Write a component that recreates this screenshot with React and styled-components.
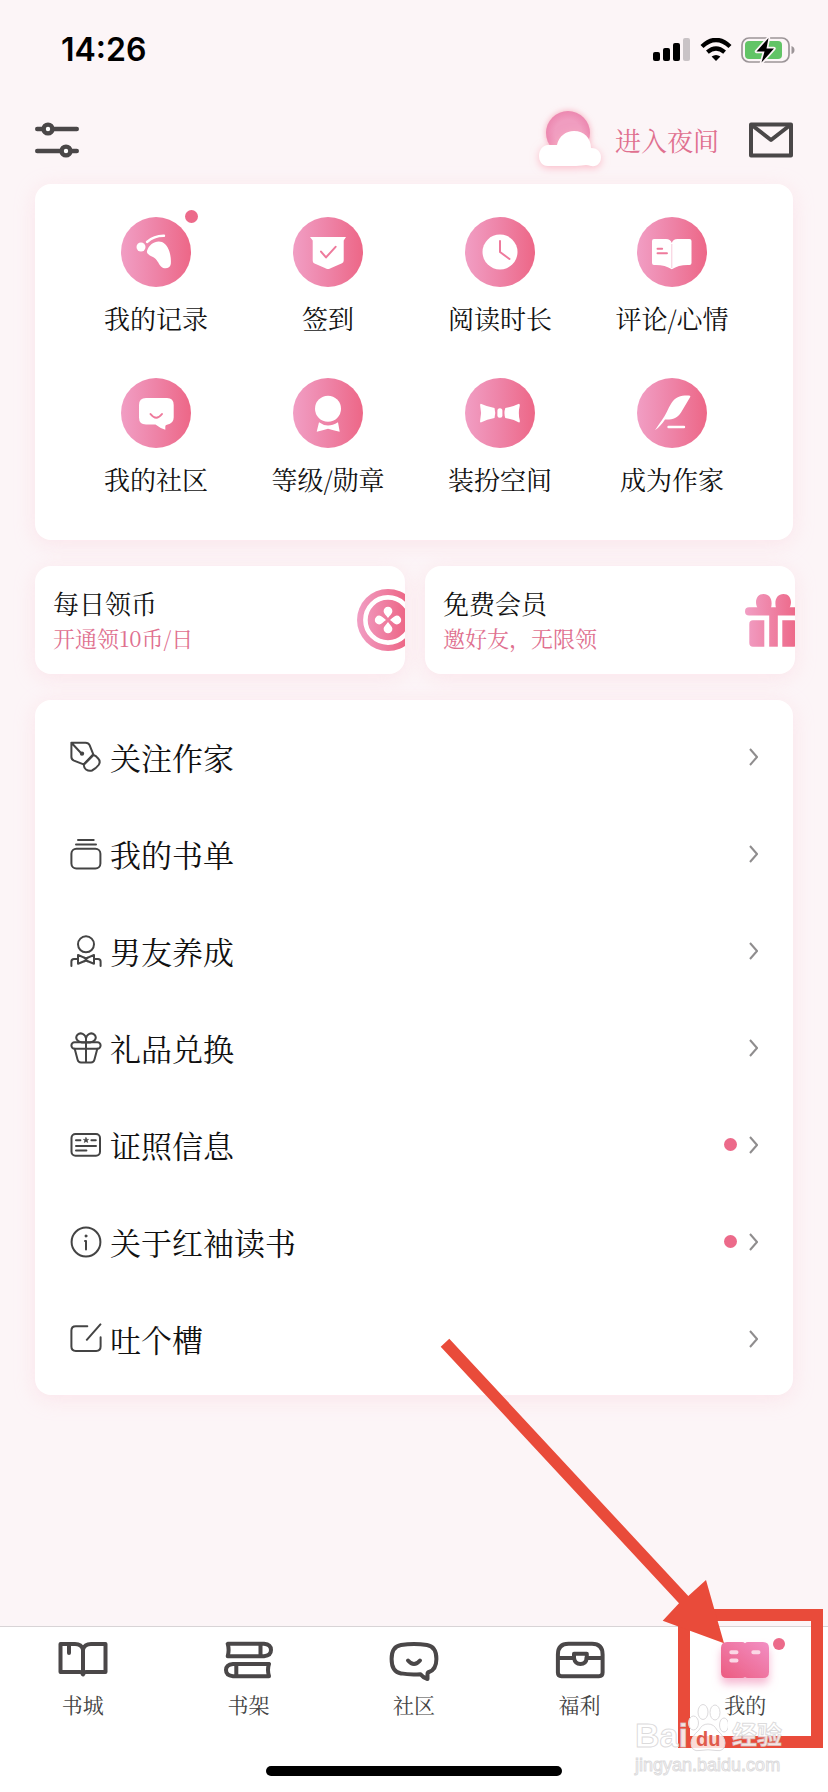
import React from "react";
import styled, { createGlobalStyle, css } from "styled-components";

const GlobalStyle = createGlobalStyle`
  *, *::before, *::after {
    box-sizing: border-box;
  }
  body {
    margin: 0;
    background: #fcf5f7;
    color: #111;
    font-family: "Noto Serif CJK SC", "Source Han Serif SC", "Noto Sans CJK SC", serif;
  }
  button {
    margin: 0;
    padding: 0;
    border: 0;
    background: none;
    color: inherit;
    font: inherit;
    cursor: pointer;
  }
  svg {
    display: block;
    flex: none;
  }
`;

const Page = styled.div`
  display: flex;
  flex-direction: column;
  min-height: 100vh;
  overflow: hidden;
`;

const StatusBar = styled.div`
  display: flex;
  align-items: center;
  justify-content: space-between;
  height: 100px;
  padding: 0 33px 0 61px;
`;

const Clock = styled.time`
  color: #000;
  font-family: Inter, "Liberation Sans", sans-serif;
  font-size: 32px;
  font-weight: 600;
  line-height: 40px;
`;

const StatusIcons = styled.div`
  display: flex;
  align-items: center;
  gap: 9px;
`;

const Header = styled.header`
  display: flex;
  align-items: center;
  justify-content: space-between;
  height: 80px;
  padding: 0 35px;
`;

const HeaderRight = styled.div`
  display: flex;
  align-items: center;
  gap: 30px;
`;

const NightButton = styled.button`
  display: flex;
  align-items: center;
  gap: 8px;
  color: #e0708f;
  font-size: 26px;
  line-height: 36px;
`;

const Main = styled.main`
  display: flex;
  flex-direction: column;
  gap: 26px;
  padding: 4px 35px 40px;
`;

const Card = styled.section`
  border-radius: 16px;
  background: #fff;
  box-shadow: 0 4px 20px rgba(252, 204, 218, 0.4);
`;

const FeatureGrid = styled(Card)`
  display: grid;
  grid-template-columns: repeat(4, 1fr);
  row-gap: 37px;
  padding: 33px 35px 38px;
`;

const Feature = styled.button`
  display: flex;
  flex-direction: column;
  align-items: center;
  gap: 13px;
  height: 124px;
`;

const FeatureIcon = styled.span`
  position: relative;
`;

const FeatureLabel = styled.span`
  font-size: 26px;
  line-height: 36px;
  white-space: nowrap;
`;

const Dot = styled.i`
  flex: none;
  width: 13px;
  height: 13px;
  border-radius: 50%;
  background: #ec6a8a;
  ${(props) =>
    props.$corner &&
    css`
      position: absolute;
      top: -7px;
      right: -7px;
    `}
`;

const Promos = styled.div`
  display: grid;
  grid-template-columns: 1fr 1fr;
  gap: 20px;
  margin-right: -2px;
`;

const Promo = styled.button`
  position: relative;
  display: flex;
  flex-direction: column;
  justify-content: center;
  height: 108px;
  padding: 0 18px;
  border-radius: 16px;
  background: #fff;
  box-shadow: 0 4px 20px rgba(252, 204, 218, 0.4);
  text-align: left;
`;

const PromoTitle = styled.span`
  font-size: 26px;
  line-height: 36px;
`;

const PromoText = styled.span`
  color: #e0708f;
  font-size: 22px;
  line-height: 34px;
`;

const PromoArt = styled.span`
  position: absolute;
  top: 0;
  right: 0;
  display: flex;
  align-items: center;
  width: ${(props) => props.$visible}px;
  height: 100%;
  overflow: hidden;
  border-radius: 0 16px 16px 0;
`;

const Menu = styled(Card)`
  display: flex;
  flex-direction: column;
  padding: 8px 35px;
`;

const MenuRow = styled.button`
  display: flex;
  align-items: center;
  height: 97px;
`;

const MenuLabel = styled.span`
  flex: 1;
  padding-left: 8px;
  font-size: 31px;
  line-height: 44px;
  text-align: left;
`;

const MenuEnd = styled.span`
  display: flex;
  align-items: center;
  gap: 12px;
`;

const Footer = styled.footer`
  position: relative;
  margin-top: auto;
`;

const TabBar = styled.nav`
  display: flex;
  height: 166px;
  border-top: 1px solid #d8d4d6;
  background: #fff;
`;

const TabCell = styled.div`
  position: relative;
  flex: 1;
`;

const Tab = styled.button`
  display: flex;
  flex-direction: column;
  align-items: center;
  gap: 6px;
  width: 100%;
  padding-top: 13px;
`;

const TabLabel = styled.span`
  color: #444;
  font-size: 21px;
  line-height: 32px;
`;

const Highlight = styled.div`
  position: absolute;
  top: -18px;
  right: 5px;
  width: 145px;
  height: 139px;
  border: 12px solid #e94b3a;
  pointer-events: none;
`;

const Arrow = styled.svg`
  position: absolute;
  right: 104px;
  bottom: 148px;
  pointer-events: none;
`;

const Watermark = styled.div`
  position: absolute;
  right: 46px;
  top: 76px;
  display: flex;
  flex-direction: column;
  color: rgba(255, 255, 255, 0.85);
  font-family: "Liberation Sans", "Noto Sans CJK SC", sans-serif;
  white-space: nowrap;
  -webkit-text-stroke: 1px rgba(205, 203, 205, 0.7);
  pointer-events: none;
`;

const WatermarkBrand = styled.div`
  display: flex;
  align-items: flex-end;
  height: 50px;
  font-size: 34px;
  font-weight: 700;
  line-height: 36px;
`;

const WatermarkName = styled.span`
  margin-left: 4px;
  font-size: 25px;
`;

const WatermarkUrl = styled.span`
  font-size: 18px;
  line-height: 24px;
`;

const HomeIndicator = styled.div`
  position: absolute;
  right: 0;
  bottom: 16px;
  left: 0;
  width: 296px;
  height: 10px;
  margin: 0 auto;
  border-radius: 5px;
  background: #000;
`;

const features = [
  {
    label: "我的记录",
    dot: true,
    art: (
      <>
        <circle cx="20" cy="30" r="4.5" />
        <path d="M26 25C31 20.5 37 18.7 43 18.8" fill="none" stroke="#fff" strokeWidth="2.4" strokeLinecap="round" />
        <path d="M26 34C28 27 35 23 41 25C48 28 50.5 39 49.8 47C49 52 43 52.5 40 49.5C37 46 36.5 42.5 32 40C28 38 25.4 37 26 34Z" />
      </>
    ),
  },
  {
    label: "签到",
    art: (
      <>
        <path d="M17 20H53L50.7 23.5V43.5Q50.7 45.5 49 46.3L37 51.5Q35 52.5 33 51.5L21 46.3Q19.7 45.5 19.7 43.5V23.5Z" />
        <path d="M28 34.6L33 40.4L42.6 29.8" fill="none" stroke="#ee7a9c" strokeWidth="2" strokeLinecap="round" strokeLinejoin="round" />
      </>
    ),
  },
  {
    label: "阅读时长",
    art: (
      <>
        <circle cx="35" cy="35" r="17.5" />
        <path d="M35 24V35L44.5 42" fill="none" stroke="#ee7a9c" strokeWidth="2" strokeLinecap="round" strokeLinejoin="round" />
      </>
    ),
  },
  {
    label: "评论/心情",
    art: (
      <>
        <path d="M17 22H29Q33.5 22 34.8 26Q36 22 40.5 22H52.5Q54.5 22 54.5 24V46Q54.5 48 52.5 48Q42 47.5 34.8 52.3Q27.5 47.5 17 48Q15 48 15 46V24Q15 22 17 22Z" />
        <path d="M34.8 27V51" stroke="#f4b3c8" strokeWidth="0.7" />
        <path d="M20.5 31.7H25.2M20.5 36.2H30" stroke="#ee7a9c" strokeWidth="1.9" strokeLinecap="round" />
      </>
    ),
  },
  {
    label: "我的社区",
    art: (
      <>
        <path d="M25 20H46Q52.7 20 52.7 27V39.5Q52.7 45.5 46 46.7Q44.3 47 44.3 48.5V51.7Q39.5 50.5 34.5 46.5H25Q18 46.5 18 39.5V27Q18 20 25 20Z" />
        <path d="M29.5 36Q35.2 43.5 41 36" fill="none" stroke="#ee7a9c" strokeWidth="2" strokeLinecap="round" />
      </>
    ),
  },
  {
    label: "等级/勋章",
    art: (
      <>
        <circle cx="35" cy="30.7" r="13" />
        <path d="M26 44.3Q30.5 47.6 35 47.6Q39.5 47.6 45 44.3L46.7 53.7Q40 52.4 35 50.8Q30 52.4 23.7 53.7Z" />
      </>
    ),
  },
  {
    label: "装扮空间",
    art: (
      <>
        <path d="M15.8 25.7Q23 29 29.5 30Q31 35 29.5 40Q22 41 15.8 44.5Q14.6 44.5 15.2 42Q17 35 15.2 28Q14.8 26 15.8 25.7Z" />
        <path d="M54 25.7Q47 29 40.3 30Q38.6 35 40.3 40Q48 41 54 44.5Q55.2 44.5 54.7 42Q53 35 54.7 28Q55 26 54 25.7Z" />
        <rect x="32.4" y="30.3" width="5" height="9.4" rx="2.5" />
      </>
    ),
  },
  {
    label: "成为作家",
    art: (
      <>
        <path d="M53 17.7C45 17.2 39 18.5 34.5 25C31 30.5 28.5 37.5 25 42Q21 47.5 18 52.3C22 49.5 25.5 45.5 28 41.5C35 42 40.5 40 44 34.5L53.2 19Q53.6 18 53 17.7Z" />
        <path d="M31.5 49H47" stroke="#fff" strokeWidth="2.4" strokeLinecap="round" />
      </>
    ),
  },
];

const menu = [
  {
    label: "关注作家",
    art: (
      <>
        <path d="M1.4 1.7H15.5Q18.5 1.7 19.6 4.2L23.3 13.3L13.6 23.4L4 19.6Q1.4 18.4 1.4 16ZM1.4 1.7L11 12" />
        <circle cx="12" cy="12.6" r="1.2" fill="#444" />
        <path d="M14 23.6L23.5 14Q26 14.6 28 17.3Q31 20.5 28.6 24Q26 27.5 22 29.5Q19 30.5 16 28.5Q13.5 26.5 14 23.6Z" />
      </>
    ),
  },
  {
    label: "我的书单",
    art: (
      <>
        <path d="M8 2H23.7M6 6.4H26" />
        <rect x="1.4" y="10.8" width="29" height="19.8" rx="5" />
      </>
    ),
  },
  {
    label: "男友养成",
    art: (
      <>
        <circle cx="16" cy="9.3" r="8" />
        <path d="M1.4 31V26.5Q1.4 24 4 24H8M30.6 31V26.5Q30.6 24 28 24H24" />
        <path d="M8 20V28.7L16 25.5L24 28.7V20L16 23.4Z" />
        <path d="M14.5 22.8L17.5 26.2M17.5 22.8L14.5 26.2" />
      </>
    ),
  },
  {
    label: "礼品兑换",
    art: (
      <>
        <path d="M16 10.5C6 11 5 5.5 7.5 2.8C10.5 -.2 15.5 2 16 6.5C16.5 2 21.5 -.2 24.5 2.8C27 5.5 26 11 16 10.5Z" />
        <rect x="1.4" y="10.3" width="29.2" height="6.4" rx="3.2" />
        <path d="M4.7 16.7L7.6 27.8Q8.3 30.4 11 30.4H21Q23.7 30.4 24.4 27.8L27.3 16.7M16 6V30.4" />
      </>
    ),
  },
  {
    label: "证照信息",
    dot: true,
    art: (
      <>
        <rect x="1.5" y="5" width="28.5" height="21.8" rx="4" />
        <path d="M6 11.2H10.4M21.4 11.2H25.8M6 17H26M6 21.6H16.4" />
        <path d="M16 8.6L16.8 10.4H18.6L17.2 11.6L17.7 13.5L16 12.4L14.3 13.5L14.8 11.6L13.4 10.4H15.2Z" fill="#444" strokeWidth="0.6" />
      </>
    ),
  },
  {
    label: "关于红袖读书",
    dot: true,
    art: (
      <>
        <circle cx="16" cy="16" r="14.4" />
        <path d="M16 15V23.6M15 15H16" />
        <circle cx="16" cy="10" r="1.2" fill="#444" strokeWidth="0.5" />
      </>
    ),
  },
  {
    label: "吐个槽",
    art: <path d="M17.3 3.2H5.8Q1.4 3.2 1.4 7.6V23.6Q1.4 28 5.8 28H26.2Q30.6 28 30.6 23.6V14.2M16.8 16.8L30.4 1.4" />,
  },
];

const tabs = [
  {
    label: "书城",
    art: (
      <>
        <path d="M2.5 4H17Q23.5 4 25 9.5Q26.5 4 33 4H47.5V32H28Q26 32 25 34.5Q24 32 22 32H2.5ZM25 9.5V34" />
        <path d="M11 5V13" />
      </>
    ),
  },
  {
    label: "书架",
    art: (
      <>
        <path d="M4.7 3.8H41Q48 4.5 48 10Q48 15.5 41 16.2H4.7Q6.5 10 4.7 3.8ZM37.5 4V16" />
        <path d="M46 23.9H10Q3 24.5 3 30Q3 35.5 10 36.2H46Q44 30 46 23.9ZM13.3 24V36" />
      </>
    ),
  },
  {
    label: "社区",
    art: (
      <>
        <path d="M12 5Q25 2.8 38 5Q47.4 6.5 47.4 19Q47.4 29.5 40 32Q38.5 32.5 38.5 34V39Q34 37.5 31.5 34.2Q21 35 12 33.4Q2.6 32 2.6 19Q2.6 6.5 12 5Z" />
        <path d="M19 20.5Q25 27.5 31 20.5" />
      </>
    ),
  },
  {
    label: "福利",
    art: (
      <>
        <path d="M13.5 3.8H37Q47.6 3.8 47.6 14.5V32.5Q47.6 36.2 44 36.2H6.5Q2.9 36.2 2.9 32.5V14.5Q2.9 3.8 13.5 3.8ZM2.9 18H19M31.5 18H47.6" />
        <path d="M19 13.7H31.8V18Q31 24 25.4 24Q20 24 19 18Z" />
      </>
    ),
  },
];

function PinkGradient({ id }) {
  return (
    <linearGradient id={id} x1="0" x2="1" y1="0" y2="0">
      <stop offset="0" stopColor="#f19ec4" />
      <stop offset="0.5" stopColor="#ee83a7" />
      <stop offset="1" stopColor="#ed6787" />
    </linearGradient>
  );
}

function SignalIcon() {
  return (
    <svg width="38" height="24" viewBox="0 0 38 24">
      <rect x="0" y="14" width="7" height="9" rx="2" />
      <rect x="10" y="10" width="7" height="13" rx="2" />
      <rect x="20" y="5" width="7" height="18" rx="2" />
      <rect x="30" y="0" width="7" height="23" rx="2" fill="#c9c3c6" />
    </svg>
  );
}

function WifiIcon() {
  return (
    <svg width="32" height="24" viewBox="0 0 32 24">
      <path d="M2 8.5Q16 -4.5 30 8.5" fill="none" stroke="#000" strokeWidth="4.4" />
      <path d="M7.4 14.2Q16 6.8 24.6 14.2" fill="none" stroke="#000" strokeWidth="4.2" />
      <path d="M11.6 18.6Q16 15.2 20.4 18.6L16 23Z" />
    </svg>
  );
}

function BatteryIcon() {
  return (
    <svg width="54" height="28" viewBox="0 0 54 28">
      <rect x="1" y="2" width="47" height="24" rx="7" fill="none" stroke="#9c9598" strokeWidth="1.7" />
      <rect x="4" y="5" width="37" height="18" rx="4" fill="#62c466" />
      <path d="M50.5 10Q53.5 11 53.5 14Q53.5 17 50.5 18Z" fill="#9c9598" />
      <path d="M27.5 2L15.5 15.5H23.5L20.5 26.5L33 12.5H25.5Z" stroke="#fcf5f7" strokeWidth="3.4" strokeLinejoin="round" />
      <path d="M27.5 2L15.5 15.5H23.5L20.5 26.5L33 12.5H25.5Z" />
    </svg>
  );
}

function SlidersIcon() {
  return (
    <svg width="44" height="36" viewBox="0 0 44 36" fill="none" stroke="#4a4748" strokeWidth="4.4" strokeLinecap="round">
      <path d="M2.2 7H41.8M2.2 29H41.8" />
      <circle cx="13" cy="7" r="4.4" fill="#fff" />
      <circle cx="31" cy="29" r="4.4" fill="#fff" />
    </svg>
  );
}

function MailIcon() {
  return (
    <svg width="44" height="36" viewBox="0 0 44 36" fill="none" stroke="#4a4748" strokeWidth="4" strokeLinejoin="round">
      <rect x="2" y="2.5" width="40" height="31" />
      <path d="M4 4L22 18L40 4" />
    </svg>
  );
}

function SunCloudIcon() {
  return (
    <svg width="72" height="76" viewBox="0 0 72 76" overflow="visible">
      <defs>
        <filter id="sunGlow" x="-30%" y="-30%" width="160%" height="160%">
          <feDropShadow dx="0" dy="0" stdDeviation="3.4" floodColor="#f6a3b6" floodOpacity="0.9" />
        </filter>
        <filter id="cloudGlow" x="-30%" y="-30%" width="160%" height="170%">
          <feDropShadow dx="0" dy="2" stdDeviation="4" floodColor="#fbb4c2" floodOpacity="0.9" />
        </filter>
        <radialGradient id="sunFill">
          <stop offset="0.6" stopColor="#f09dc0" />
          <stop offset="1" stopColor="#ec88b0" />
        </radialGradient>
      </defs>
      <circle cx="33" cy="31" r="22" fill="url(#sunFill)" filter="url(#sunGlow)" />
      <path
        d="M13 43H22C24 34 31 29 39 29C49 29 56 36 56 46C63 46 66 51 66 55C66 61 62 65 56 64C51 62 46 64 41 64H13C7 64 4 59 4 54C4 48 8 43 13 43Z"
        fill="#fff"
        filter="url(#cloudGlow)"
      />
    </svg>
  );
}

function CoinArt() {
  const petal = "M31 29C29 26 26.6 24.5 26.6 22.2A4.4 4.4 0 0 1 35.4 22.2C35.4 24.5 33 26 31 29Z";
  return (
    <svg width="62" height="62" viewBox="0 0 62 62">
      <defs>
        <linearGradient id="coinFill" gradientUnits="userSpaceOnUse" x1="0" x2="48" y1="0" y2="0">
          <stop offset="0" stopColor="#f19ec4" />
          <stop offset="1" stopColor="#ed6787" />
        </linearGradient>
      </defs>
      <circle cx="31" cy="31" r="31" fill="url(#coinFill)" />
      <circle cx="31" cy="31" r="22.6" fill="none" stroke="#fff" strokeWidth="4.6" />
      {[0, 90, 180, 270].map((angle) => (
        <path key={angle} d={petal} fill="#fff" transform={`rotate(${angle} 31 31)`} />
      ))}
    </svg>
  );
}

function GiftArt() {
  return (
    <svg width="58" height="56" viewBox="0 -2 58 56">
      <defs>
        <linearGradient id="giftFill" gradientUnits="userSpaceOnUse" x1="0" x2="52" y1="0" y2="0">
          <stop offset="0" stopColor="#f19ec4" />
          <stop offset="1" stopColor="#ed6787" />
        </linearGradient>
      </defs>
      <g fill="url(#giftFill)">
        <path d="M12.5 14C9 7 12 0 18.5 0C25 0 28 6 26 14ZM31 14C29 6 32 0 38.5 0C45 0 48 7 44.5 14Z" />
        <rect x="0" y="13.3" width="57" height="8.2" rx="4.1" />
        <rect x="24.2" y="20" width="8.6" height="32.7" />
        <path d="M8 26.3H19.3V52.7H8Q4.3 52.7 4.3 49V30Q4.3 26.3 8 26.3Z" />
        <path d="M37.3 26.3H49Q52.7 26.3 52.7 30V49Q52.7 52.7 49 52.7H37.3Z" />
      </g>
    </svg>
  );
}

function MineIcon() {
  return (
    <svg width="50" height="42" viewBox="0 0 50 42" overflow="visible">
      <defs>
        <linearGradient id="mineFill" x1="0" x2="1" y1="1" y2="0">
          <stop offset="0" stopColor="#ec5c80" />
          <stop offset="1" stopColor="#f28fc4" />
        </linearGradient>
        <filter id="mineGlow" x="-30%" y="-30%" width="160%" height="180%">
          <feDropShadow dx="0" dy="6" stdDeviation="4" floodColor="#f08bb5" floodOpacity="0.6" />
        </filter>
      </defs>
      <path
        d="M7 2H22Q24 2 25 3.2Q26 2 28 2H43Q49 2 49 8V32Q49 38 43 38H28Q26 38 25 37Q24 38 22 38H7Q1 38 1 32V8Q1 2 7 2Z"
        fill="url(#mineFill)"
        filter="url(#mineGlow)"
      />
      <path d="M11.3 12.3H16.5M33.3 12.3H38.5M11.3 20.4H16.5" stroke="#fbd8e6" strokeWidth="4" strokeLinecap="round" />
      <circle cx="59" cy="4" r="6" fill="#ec6a8a" />
    </svg>
  );
}

function PawIcon() {
  return (
    <svg width="40" height="50" viewBox="0 0 40 50" fill="rgba(255,255,255,0.8)" stroke="#dcdadc" strokeWidth="1">
      <ellipse cx="5.5" cy="20" rx="5" ry="7" />
      <ellipse cx="15" cy="9" rx="5" ry="7.5" />
      <ellipse cx="27" cy="9.5" rx="5" ry="7.5" />
      <ellipse cx="36" cy="22" rx="4.5" ry="7" />
      <path d="M20 21Q26 21 29 27Q37 34 37 40Q37 49 28 47.5Q20 46 12 47.5Q3 49 3 40Q3 34 11 27Q14 21 20 21Z" />
      <text x="8" y="43" fill="#e05a4b" stroke="none" fontSize="20" fontWeight="700">
        du
      </text>
    </svg>
  );
}

export default function App() {
  return (
    <Page>
      <GlobalStyle />
      <StatusBar>
        <Clock>14:26</Clock>
        <StatusIcons>
          <SignalIcon />
          <WifiIcon />
          <BatteryIcon />
        </StatusIcons>
      </StatusBar>
      <Header>
        <button type="button" aria-label="设置">
          <SlidersIcon />
        </button>
        <HeaderRight>
          <NightButton type="button">
            <SunCloudIcon />
            进入夜间
          </NightButton>
          <button type="button" aria-label="消息">
            <MailIcon />
          </button>
        </HeaderRight>
      </Header>

      <Main>
        <FeatureGrid>
          {features.map((item, i) => (
            <Feature type="button" key={item.label}>
              <FeatureIcon>
                <svg width="70" height="70" viewBox="0 0 70 70" fill="#fff">
                  <defs>
                    <PinkGradient id={`feature${i}`} />
                  </defs>
                  <circle cx="35" cy="35" r="35" fill={`url(#feature${i})`} />
                  {item.art}
                </svg>
                {item.dot && <Dot $corner />}
              </FeatureIcon>
              <FeatureLabel>{item.label}</FeatureLabel>
            </Feature>
          ))}
        </FeatureGrid>

        <Promos>
          <Promo type="button">
            <PromoTitle>每日领币</PromoTitle>
            <PromoText>开通领10币/日</PromoText>
            <PromoArt $visible={48}>
              <CoinArt />
            </PromoArt>
          </Promo>
          <Promo type="button">
            <PromoTitle>免费会员</PromoTitle>
            <PromoText>邀好友，无限领</PromoText>
            <PromoArt $visible={50}>
              <GiftArt />
            </PromoArt>
          </Promo>
        </Promos>

        <Menu>
          {menu.map((item) => (
            <MenuRow type="button" key={item.label}>
              <svg width="32" height="32" viewBox="0 0 32 32" fill="none" stroke="#444" strokeWidth="2" strokeLinecap="round" strokeLinejoin="round">
                {item.art}
              </svg>
              <MenuLabel>{item.label}</MenuLabel>
              <MenuEnd>
                {item.dot && <Dot />}
                <svg width="9" height="18" viewBox="0 0 9 18" fill="none" stroke="#8f8d8e" strokeWidth="2">
                  <path d="M1 1L8 9L1 17" />
                </svg>
              </MenuEnd>
            </MenuRow>
          ))}
        </Menu>
      </Main>

      <Footer>
        <TabBar>
          {tabs.map((tab) => (
            <TabCell key={tab.label}>
              <Tab type="button">
                <svg width="50" height="42" viewBox="0 0 50 42" fill="none" stroke="#4a4748" strokeWidth="4" strokeLinecap="round" strokeLinejoin="round">
                  {tab.art}
                </svg>
                <TabLabel>{tab.label}</TabLabel>
              </Tab>
            </TabCell>
          ))}
          <TabCell>
            <Tab type="button">
              <MineIcon />
              <TabLabel>我的</TabLabel>
            </Tab>
            <Highlight />
            <Arrow width="284" height="306" viewBox="0 0 284 306" fill="#e94b3a">
              <path d="M.7 8.7L9.3 .7L248.3 258L266 242L284 305.3L222.7 282.7L239 265.3Z" />
            </Arrow>
            <Watermark>
              <WatermarkBrand>
                Bai
                <PawIcon />
                <WatermarkName>经验</WatermarkName>
              </WatermarkBrand>
              <WatermarkUrl>jingyan.baidu.com</WatermarkUrl>
            </Watermark>
          </TabCell>
        </TabBar>
        <HomeIndicator />
      </Footer>
    </Page>
  );
}
